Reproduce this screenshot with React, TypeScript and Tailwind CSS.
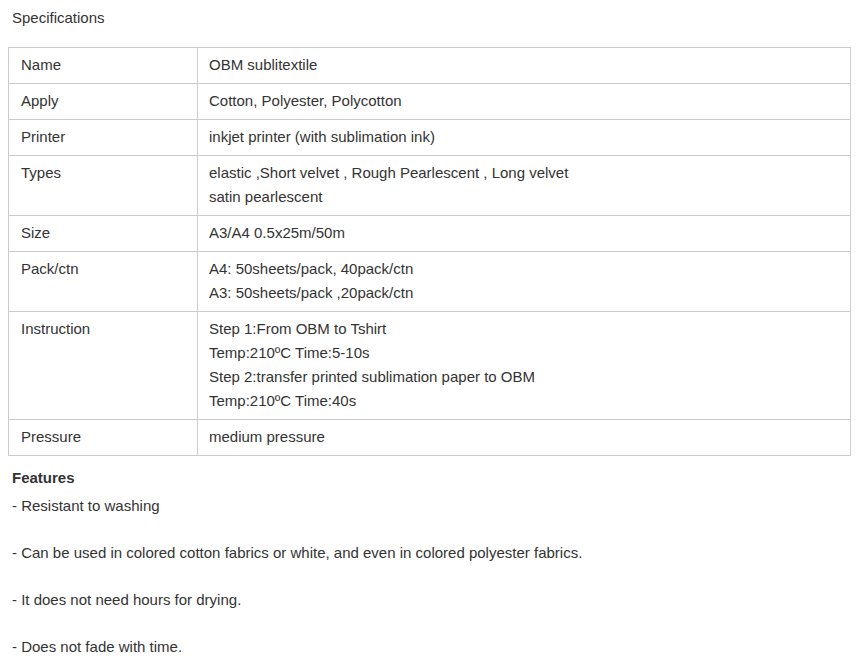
export default function App() {
  const rows: [string, string[]][] = [
    ["Name", ["OBM sublitextile"]],
    ["Apply", ["Cotton, Polyester, Polycotton"]],
    ["Printer", ["inkjet printer (with sublimation ink)"]],
    ["Types", ["elastic ,Short velvet , Rough Pearlescent , Long velvet", "satin pearlescent"]],
    ["Size", ["A3/A4 0.5x25m/50m"]],
    ["Pack/ctn", ["A4: 50sheets/pack, 40pack/ctn", "A3: 50sheets/pack ,20pack/ctn"]],
    ["Instruction", ["Step 1:From OBM to Tshirt", "Temp:210ºC Time:5-10s", "Step 2:transfer printed sublimation paper to OBM", "Temp:210ºC Time:40s"]],
    ["Pressure", ["medium pressure"]],
  ];
  return (
    <div className="bg-white text-[#333] text-[15px] leading-[24px] px-[8px]" style={{ fontFamily: '"Liberation Sans", Arial, sans-serif' }}>
      <div className="pt-[6px] pl-[4px] h-[47px]">Specifications</div>
      <table className="w-[843px] border-collapse">
        <tbody>
          {rows.map(([k, v]) => (
            <tr key={k}>
              <td className="border border-[#ccc] w-[189px] align-top pl-[12px] pt-[5px] pb-[6px]">{k}</td>
              <td className="border border-[#ccc] align-top pl-[11px] pt-[5px] pb-[6px]">
                {v.map((l) => <div key={l}>{l}</div>)}
              </td>
            </tr>
          ))}
        </tbody>
      </table>
      <div className="pl-[4px] pt-[10px]">
        <div className="font-bold">Features</div>
        <div className="mt-[4px]">- Resistant to washing</div>
        <div className="mt-[23px]">- Can be used in colored cotton fabrics or white, and even in colored polyester fabrics.</div>
        <div className="mt-[23px]">- It does not need hours for drying.</div>
        <div className="mt-[23px]">- Does not fade with time.</div>
      </div>
    </div>
  );
}
